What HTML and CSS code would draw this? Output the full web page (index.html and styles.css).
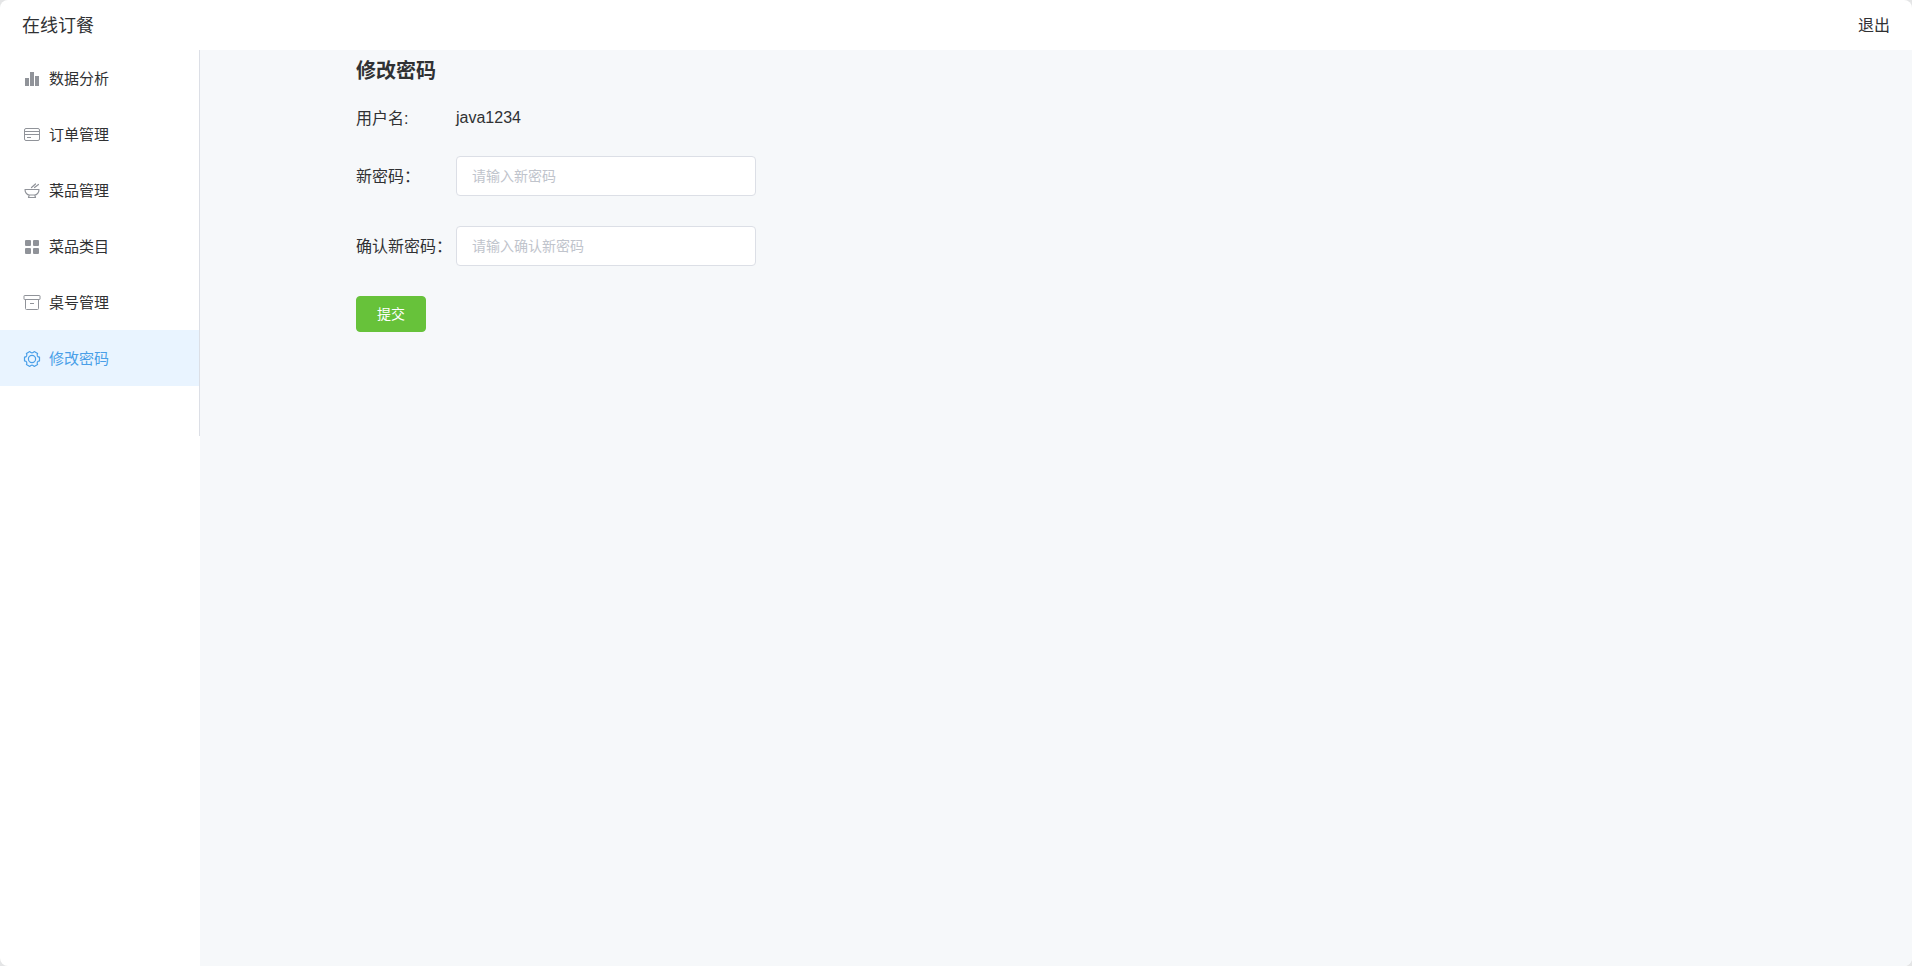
FILE: index.html
```html
<!DOCTYPE html>
<html lang="zh-CN">
<head>
<meta charset="utf-8">
<title>在线订餐</title>
<link rel="stylesheet" href="styles.css">
</head>
<body>
<div class="app">
  <header class="header">
    <div class="brand">在线订餐</div>
    <button class="logout" type="button">退出</button>
  </header>
  <div class="body">
    <aside class="sidebar">
      <nav class="menu">
        <a class="menu-item" href="#data">
          <svg class="icon" viewBox="0 -1 18 18" aria-hidden="true"><path fill="currentColor" d="M2 8h4v8H2zM7 2h4v14H7zM12 6h4v10h-4z"/></svg>
          <span class="menu-text">数据分析</span>
        </a>
        <a class="menu-item" href="#orders">
          <svg class="icon" viewBox="0 -1 18 18" aria-hidden="true"><g fill="none" stroke="currentColor"><rect x="1.500" y="2.500" width="15" height="12" rx="1.500"/><path d="M1.500 5.500h15M1.500 8.500h15M4 11.500h4"/></g></svg>
          <span class="menu-text">订单管理</span>
        </a>
        <a class="menu-item" href="#dishes">
          <svg class="icon" viewBox="0 -1 18 18" aria-hidden="true"><g fill="none" stroke="currentColor" stroke-width="1.200" stroke-linejoin="round" stroke-linecap="round"><path d="M2 7.500h14c0 3-2 5.500-4.500 5.500h-5C4 13 2 10.500 2 7.500zM6.200 13.200l-.7 2.300h7l-.7-2.300M8.500 5.500l4-3.500M11.500 5.500l4-3"/></g></svg>
          <span class="menu-text">菜品管理</span>
        </a>
        <a class="menu-item" href="#categories">
          <svg class="icon" viewBox="0 -1 18 18" aria-hidden="true"><g fill="currentColor"><rect x="2" y="2" width="6" height="6" rx="1"/><rect x="10" y="2" width="6" height="6" rx="1"/><rect x="2" y="10" width="6" height="6" rx="1"/><rect x="10" y="10" width="6" height="6" rx="1"/></g></svg>
          <span class="menu-text">菜品类目</span>
        </a>
        <a class="menu-item" href="#tables">
          <svg class="icon" viewBox="0 -1 18 18" aria-hidden="true"><g fill="none" stroke="currentColor"><rect x="1" y="1.500" width="16" height="4" rx=".5"/><path d="M2.500 5.500v9q0 1 1 1h11q1 0 1-1v-9M7 9.500h4"/></g></svg>
          <span class="menu-text">桌号管理</span>
        </a>
        <a class="menu-item is-active" href="#password" aria-current="page">
          <svg class="icon" viewBox="0 -1 18 18" aria-hidden="true"><g fill="none" stroke="currentColor" stroke-width="1.200" stroke-linejoin="round"><path d="M16.500 7.100V10.900Q14.900 10.900 14.400 12.100Q13.900 13.400 14.600 14.500L11.200 16.500Q10.300 15.200 9 15.200Q7.700 15.200 6.800 16.500L3.400 14.500Q4.100 13.400 3.600 12.100Q3.100 10.900 1.500 10.900V7.100Q3.100 7.100 3.600 5.900Q4.100 4.600 3.400 3.500L6.800 1.500Q7.700 2.800 9 2.800Q10.300 2.800 11.200 1.500L14.600 3.500Q13.900 4.600 14.400 5.900Q14.900 7.100 16.500 7.100Z"/><circle cx="9" cy="9" r="3.600"/></g></svg>
          <span class="menu-text">修改密码</span>
        </a>
      </nav>
    </aside>
    <main class="main">
      <form class="password-form">
        <h1 class="title">修改密码</h1>
        <div class="row row-text">
          <span class="label">用户名:</span>
          <span>java1234</span>
        </div>
        <div class="row">
          <label class="label" for="new-password">新密码：</label>
          <input class="input" id="new-password" type="password" placeholder="请输入新密码">
        </div>
        <div class="row">
          <label class="label" for="confirm-password">确认新密码：</label>
          <input class="input" id="confirm-password" type="password" placeholder="请输入确认新密码">
        </div>
        <button class="submit" type="button">提交</button>
      </form>
    </main>
  </div>
</div>
</body>
</html>
```
FILE: styles.css
```css
* {
  box-sizing: border-box;
}

body {
  margin: 0;
  background: #e4e5e6;
  color: #303133;
  font-family: "Liberation Sans", "Noto Sans CJK SC", sans-serif;
  font-size: 16px;
}

button,
input {
  font-family: inherit;
}

.app {
  display: flex;
  flex-direction: column;
  min-height: 100vh;
  border-radius: 8px;
  overflow: hidden;
  background: #fff;
}

.header {
  display: flex;
  align-items: center;
  justify-content: space-between;
  height: 50px;
  padding: 0 22px 2px;
}

.brand {
  font-size: 18px;
}

.logout {
  padding: 0;
  border: 0;
  background: none;
  color: inherit;
  font-size: 16px;
  cursor: pointer;
}

.body {
  display: flex;
  flex: 1;
}

.sidebar {
  flex: none;
  width: 200px;
}

.menu {
  padding-bottom: 50px;
  border-right: 1px solid #dcdfe6;
}

.menu-item {
  display: flex;
  align-items: center;
  gap: 8px;
  height: 56px;
  padding: 0 23px;
  color: #303133;
  font-size: 15px;
  text-decoration: none;
}

.menu-text {
  padding-bottom: 2px;
}

.icon {
  width: 18px;
  height: 18px;
  color: #909399;
}

.menu-item.is-active {
  background: #e9f4ff;
}

.menu-item.is-active,
.menu-item.is-active .icon {
  color: #4a9fe8;
}

.main {
  flex: 1;
  background: #f6f8fa;
}

.password-form {
  max-width: 1400px;
  margin: 0 auto;
}

.title {
  margin: 0;
  font-size: 20px;
  line-height: 42px;
}

.row {
  display: flex;
  align-items: center;
  height: 40px;
  margin-bottom: 30px;
}

.row-text {
  height: 52px;
  margin-bottom: 12px;
}

.label {
  flex: none;
  width: 100px;
  padding-bottom: 2px;
  white-space: nowrap;
}

.input {
  width: 300px;
  height: 40px;
  padding: 0 15px;
  border: 1px solid #dcdfe6;
  border-radius: 4px;
  background: #fff;
  color: #606266;
  font-size: 14px;
}

.input::placeholder {
  color: #c0c4cc;
}

.submit {
  padding: 0 20px;
  border: 1px solid #67c23a;
  border-radius: 4px;
  background: #67c23a;
  color: #fff;
  font-size: 14px;
  line-height: 34px;
  cursor: pointer;
}
```
